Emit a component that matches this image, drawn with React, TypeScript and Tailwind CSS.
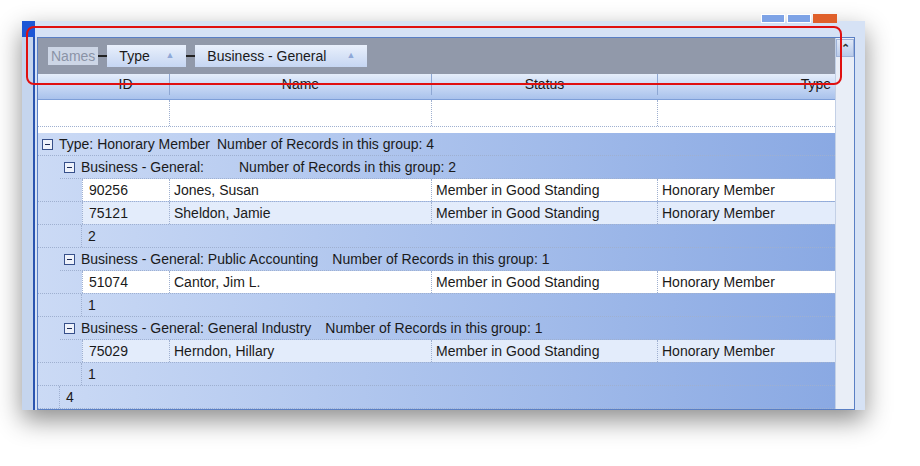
import React from "react";

const font = { fontFamily: '"Liberation Sans", Arial, sans-serif' };

function Minus() {
  return (
    <span className="inline-flex w-[11px] h-[11px] border border-[#37508a] bg-[#eef2fb] items-center justify-center mr-[6px] shrink-0">
      <span className="w-[5px] h-[1px] bg-[#1b2a55]" />
    </span>
  );
}

const dot = "border-dotted border-[#9fb0d0]";

function Data({ id, name, alt }: { id: string; name: string; alt?: boolean }) {
  const bg = alt ? "bg-[#e3ecfb]" : "bg-white";
  return (
    <div className={`flex h-[23px] items-center text-[14px] text-[#1a1a1a] border-b ${dot}`}>
      <div className="w-[44px] shrink-0 h-full" />
      <div className={`w-[87px] pl-[6px] h-full flex items-center border-l ${dot} ${bg}`}>{id}</div>
      <div className={`w-[262px] pl-[4px] h-full flex items-center border-l ${dot} ${bg}`}>{name}</div>
      <div className={`w-[226px] pl-[4px] h-full flex items-center border-l ${dot} ${bg}`}>Member in Good Standing</div>
      <div className={`flex-1 pl-[4px] h-full flex items-center border-l ${dot} ${bg}`}>Honorary Member</div>
    </div>
  );
}

function Group({ label, count, wide }: { label: string; count: number; wide?: boolean }) {
  return (
    <div className={`flex h-[23px] items-center text-[14px] text-[#1a1a1a] border-b ${dot} pl-[4px]`}>
      <Minus />
      <span className={wide ? "w-[158px]" : ""}>{label}</span>
      <span className={wide ? "" : "ml-[14px]"}>Number of Records in this group: {count}</span>
    </div>
  );
}

function Sum({ n, indent }: { n: string; indent: number }) {
  return (
    <div className={`flex h-[23px] items-center text-[14px] text-[#1a1a1a] border-b ${dot}`}>
      <div style={{ width: indent }} className="shrink-0" />
      <div className={`pl-[6px] h-full flex items-center border-l ${dot}`}>{n}</div>
    </div>
  );
}

export default function App() {
  return (
    <div className="w-[920px] h-[466px] bg-white relative overflow-hidden" style={font}>
      <div className="absolute left-[22px] top-[21px] w-[843px] h-[389px] bg-[#1d57d6] shadow-[0_10px_24px_rgba(0,0,0,0.45)] flex overflow-hidden">
        <div className="w-[15px] bg-[#c5d5ee] border-r-2 border-[#2b55b0] mt-[16px]" />
        <div className="flex-1 flex flex-col bg-[#d6e2f5] pt-[16px] relative">
          <div className="flex flex-1 border border-[#5a7fc4] mx-[2px] mr-[10px] bg-white">
            <div className="w-[797px] flex flex-col">
              <div className="h-[36px] shrink-0 bg-[#9199aa] flex items-center pl-[10px] text-[14px]">
                <span className="px-[3px] bg-[#cdd6e6] text-[#8a93a6] h-[18px] flex items-center">Names</span>
                <span className="w-[9px] h-[2px] bg-[#222]" />
                <span className="h-[22px] w-[79px] flex items-center justify-between px-[12px] bg-gradient-to-b from-[#e9f0fc] to-[#c6d6f2] text-[#1a1a1a]">Type<span className="text-[#8fa8d8] text-[9px]">▲</span></span>
                <span className="w-[9px] h-[2px] bg-[#222]" />
                <span className="h-[22px] w-[172px] flex items-center justify-between pl-[12px] pr-[12px] bg-gradient-to-b from-[#e9f0fc] to-[#c6d6f2] text-[#1a1a1a]">Business - General<span className="text-[#8fa8d8] text-[9px]">▲</span></span>
              </div>
              <div className="h-[26px] shrink-0 bg-gradient-to-b from-[#e6eefb] to-[#a9c2ec] flex items-end pb-[4px] text-[14px] text-[#1a1a1a] border-b border-[#7e9fd8]">
                <div className="w-[131px] text-center pl-[44px]">ID</div>
                <div className="w-[262px] text-center border-l border-[#8ea7d3]">Name</div>
                <div className="w-[226px] text-center border-l border-[#8ea7d3]">Status</div>
                <div className="flex-1 text-right pr-[4px] border-l border-[#8ea7d3]">Type</div>
              </div>
              <div className="h-[27px] shrink-0 flex border-b border-dotted border-[#9fb0d0]">
                <div className="w-[131px]" />
                <div className={`w-[262px] border-l ${dot}`} />
                <div className={`w-[226px] border-l ${dot}`} />
                <div className={`flex-1 border-l ${dot}`} />
              </div>
              <div className="h-[6px] shrink-0 bg-white" />
              <div className="flex-1 bg-gradient-to-r from-[#cbdaf5] to-[#8aa9e3]">
                <Group label="Type: Honorary Member" count={4} wide />
                <div className="ml-[22px]"><Group label="Business - General:" count={2} wide /></div>
                <Data id="90256" name="Jones, Susan" />
                <Data id="75121" name="Sheldon, Jamie" alt />
                <Sum n="2" indent={43} />
                <div className="ml-[22px]"><Group label="Business - General: Public Accounting" count={1} /></div>
                <Data id="51074" name="Cantor, Jim L." />
                <Sum n="1" indent={43} />
                <div className="ml-[22px]"><Group label="Business - General: General Industry" count={1} /></div>
                <Data id="75029" name="Herndon, Hillary" alt />
                <Sum n="1" indent={43} />
                <Sum n="4" indent={21} />
              </div>
            </div>
            <div className="flex-1 bg-[#e9eef7] border-l border-[#c3d0e6] flex flex-col items-center pt-[1px]">
              <div className="w-[18px] h-[18px] bg-gradient-to-b from-[#dfe8f7] to-[#b9cbea] border border-[#9fb3d8] flex items-center justify-center text-[11px] font-bold text-[#333]">⌃</div>
            </div>
          </div>
        </div>
      </div>
      <div className="absolute right-[83px] top-[14px] flex gap-[2px]">
        <div className="w-[24px] h-[9px] bg-[#7ea3e6] border border-white" />
        <div className="w-[24px] h-[9px] bg-[#7ea3e6] border border-white" />
        <div className="w-[24px] h-[9px] bg-[#e0602a]" />
      </div>
      <div className="absolute left-[26px] top-[26px] w-[816px] h-[59px] border-2 border-[#e01010] rounded-[8px]" />
    </div>
  );
}
